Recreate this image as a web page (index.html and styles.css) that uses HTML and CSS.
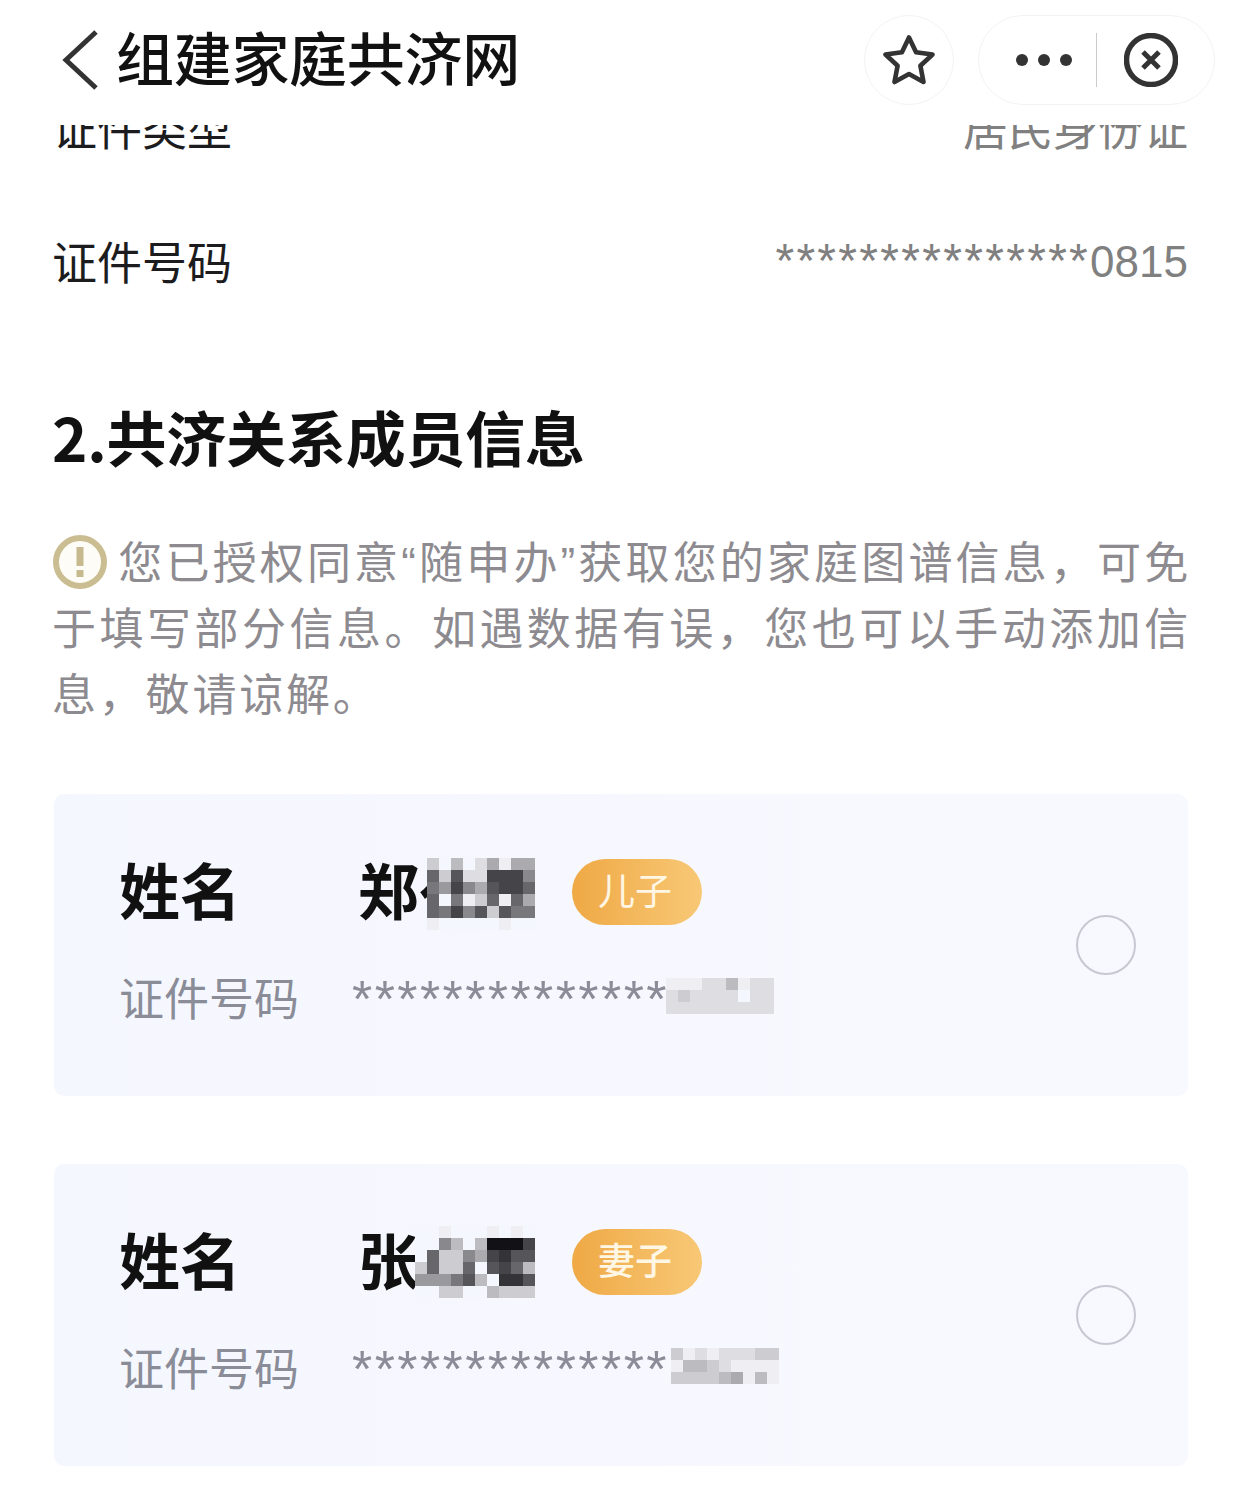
FILE: index.html
```html
<!DOCTYPE html>
<html lang="zh-CN">
<head>
  <meta charset="UTF-8" />
  <meta name="viewport" content="width=device-width, initial-scale=1.0"/>
  <title>组建家庭共济网</title>
  <link rel="stylesheet" href="styles.css">
</head>
<body>
  <header class="nav">
    <svg class="back-icon" width="36" height="60" viewBox="0 0 36 60">
      <path d="M34 2 L4 30 L34 58" fill="none" stroke="#333" stroke-width="5"/>
    </svg>
    <h1 class="nav-title">组建家庭共济网</h1>
    <div class="fav-btn">
      <svg width="52" height="50" viewBox="0 0 52 50">
        <polygon points="26,2.5 33.05,17.3 49.5,19.5 37.4,30.7 40.5,47 26,39 11.5,47 14.6,30.7 2.5,19.5 18.95,17.3" fill="none" stroke="#333" stroke-width="4.6" stroke-linejoin="round"/>
      </svg>
    </div>
    <div class="capsule">
      <div class="dots"><span></span><span></span><span></span></div>
      <div class="capsule-line"></div>
      <svg width="54" height="54" viewBox="0 0 54 54">
        <circle cx="27" cy="27" r="24.5" fill="none" stroke="#333" stroke-width="5.5"/>
        <path d="M19 19 L35 35 M35 19 L19 35" fill="none" stroke="#333" stroke-width="5"/>
      </svg>
    </div>
  </header>

  <main class="content">
    <div class="info-row first">
      <span class="info-label">证件类型</span>
      <span class="info-value cjk">居民身份证</span>
    </div>
    <div class="info-row">
      <span class="info-label">证件号码</span>
      <span class="info-value"><span class="stars">***************</span>0815</span>
    </div>

    <h2 class="section-title">2.共济关系成员信息</h2>

    <p class="notice">
      <svg class="notice-icon" width="54" height="54" viewBox="0 0 54 54">
        <circle cx="27" cy="27" r="24" fill="#fdfcf6" stroke="#cbbd92" stroke-width="6"/>
        <rect x="23.5" y="12" width="7" height="19" fill="#c6b98f"/>
        <rect x="23.5" y="35" width="7" height="7" fill="#c6b98f"/>
      </svg>您已授权同意“随申办”获取您的家庭图谱信息，可免于填写部分信息。如遇数据有误，您也可以手动添加信息，敬请谅解。
    </p>

    <section class="member-card">
      <div class="member-info">
        <div class="member-line">
          <span class="member-label strong">姓名</span>
          <span class="member-name">郑亻<span class="mosaic over low" data-rows="cfbfdaeaa,6c5dd4448,7948a5446,6f7ec6e6a,67485c577,efffffeff"></span></span>
          <span class="badge">儿子</span>
        </div>
        <div class="member-line id-line">
          <span class="member-label">证件号码</span>
          <span class="stars card-stars">**************</span>
          <span class="mosaic tail-a" data-rows="eeeddbedd,dcddddfdd,ddddddddd"></span>
        </div>
      </div>
      <span class="radio"></span>
    </section>

    <section class="member-card">
      <div class="member-info">
        <div class="member-line">
          <span class="member-label strong">姓名</span>
          <span class="member-name">张<span class="mosaic over" data-rows="ffefffefef,ff8bfb1114,f6cc8a4355,c6cc6f546b,99975bf335,ffccffbccc"></span></span>
          <span class="badge strong">妻子</span>
        </div>
        <div class="member-line id-line">
          <span class="member-label">证件号码</span>
          <span class="stars card-stars">**************</span>
          <span class="mosaic tail-b" data-rows="cededddcc,ebbcdeeee,ccccbaebe"></span>
        </div>
      </div>
      <span class="radio"></span>
    </section>
  </main>

  <script src="mosaic.js"></script>
</body>
</html>
```

FILE: styles.css
```css
:root {
  --text: #1c1c1e;
  --muted: #808080;
  --note: #8d8b90;
  --label: #8a8c98;
}

* {
  box-sizing: border-box;
}

html,
body {
  margin: 0;
  padding: 0;
}

body {
  width: 1242px;
  height: 1512px;
  overflow: hidden;
  background: #fff;
  color: var(--text);
  font-family: "Noto Sans CJK SC", "Liberation Sans", sans-serif;
  display: flex;
  flex-direction: column;
}

/* top bar */
.nav {
  height: 125px;
  flex: none;
  display: flex;
  align-items: flex-start;
  padding: 15px 27px 0 62px;
  background: #fff;
}

.back-icon {
  margin-top: 15px;
  flex: none;
}

.nav-title {
  margin: 0 0 0 18px;
  font-size: 58px;
  line-height: 82px;
  font-weight: 500;
  letter-spacing: -0.3px;
  color: #111;
  flex: 1;
}

.fav-btn {
  width: 90px;
  height: 90px;
  border: 1px solid #f3f3f3;
  border-radius: 50%;
  display: flex;
  align-items: center;
  justify-content: center;
  margin-right: 24px;
}

.capsule {
  width: 237px;
  height: 90px;
  border: 1px solid #f3f3f3;
  border-radius: 45px;
  display: flex;
  align-items: center;
  padding-left: 37px;
}

.dots {
  display: flex;
  gap: 10px;
  width: 80px;
}

.dots span {
  width: 12px;
  height: 12px;
  border-radius: 50%;
  background: #333;
}

.capsule-line {
  width: 1px;
  height: 54px;
  background: #ccc;
  margin-right: 27px;
}

/* page body */
.content {
  flex: 1;
  overflow: hidden;
  padding: 0 54px;
}

.info-row {
  height: 134px;
  display: flex;
  align-items: center;
  justify-content: space-between;
  font-size: 44px;
}

.info-row.first {
  margin-top: -64px;
}

.info-label {
  font-size: 45px;
  margin-left: -2px;
  padding-bottom: 4px;
}

.info-value {
  color: var(--muted);
  font-family: "Liberation Sans", "Noto Sans CJK SC", sans-serif;
}

.info-value.cjk {
  font-size: 45px;
  padding-bottom: 4px;
}

.stars {
  font-size: 48px;
  line-height: 1;
  letter-spacing: 2.3px;
}

.section-title {
  margin: 65px 0 0 -2px;
  font-size: 60px;
  line-height: 84px;
  font-weight: 700;
  letter-spacing: -0.2px;
  color: #111;
}

.notice {
  margin: 53px -3px 0 -2px;
  font-family: "Liberation Sans", "Noto Sans CJK SC", sans-serif;
  font-size: 44px;
  line-height: 66px;
  letter-spacing: 2.8px;
  color: var(--note);
  text-align: justify;
}

.notice-icon {
  vertical-align: -10px;
  margin-right: 11px;
  margin-left: 1px;
}

/* member cards */
.member-card {
  height: 302px;
  margin-top: 68px;
  padding: 0 52px 0 65px;
  background: linear-gradient(90deg, #f5f7fe, #f8f9ff);
  border-radius: 10px;
  display: flex;
  align-items: center;
  justify-content: space-between;
}

.notice + .member-card {
  margin-top: 65px;
}

.member-info {
  margin-bottom: 2px;
}

.member-line {
  display: flex;
  align-items: center;
  height: 66px;
}

.id-line {
  margin-top: 38px;
}

.member-label {
  width: 233px;
  font-size: 45px;
  color: var(--label);
  flex: none;
}

.member-label.strong {
  width: 239px;
  font-size: 61px;
  line-height: 78px;
  height: 84px;
  font-weight: 700;
  color: #111;
}

.member-name {
  position: relative;
  width: 177px;
  height: 84px;
  font-size: 61px;
  line-height: 78px;
  font-weight: 700;
  color: #111;
  white-space: nowrap;
}

.badge {
  width: 130px;
  height: 66px;
  margin-left: 37px;
  padding-right: 4px;
  border-radius: 33px;
  background: linear-gradient(90deg, #efa945, #f8c876);
  color: #fff6e4;
  font-size: 37px;
  line-height: 61px;
  text-align: center;
}

.badge.strong {
  font-weight: 500;
}

.card-stars {
  font-family: "Liberation Sans", sans-serif;
  font-size: 52px;
  letter-spacing: 2.4px;
  padding-top: 6px;
  color: var(--label);
  line-height: 66px;
}

.mosaic {
  display: inline-grid;
  grid-auto-rows: 12px;
  grid-auto-columns: 12px;
  flex: none;
}

.mosaic.over {
  position: absolute;
  right: 0;
  top: 6px;
}

.mosaic.over.low {
  top: 8px;
}

.mosaic.tail-a {
  margin: 0 0 0 -3px;
}

.mosaic.tail-b {
  margin: 0 0 0 2px;
}

.mosaic span {
  display: block;
  width: 12px;
  height: 12px;
}

.radio {
  width: 60px;
  height: 60px;
  border: 2px solid #c6c9d1;
  border-radius: 50%;
  flex: none;
}
```

FILE: mosaic.js
```js
// build the pixelated name / id blocks from the grey levels in data-rows
document.querySelectorAll(".mosaic").forEach(function (box) {
  const rows = box.dataset.rows.split(",");
  rows.forEach(function (row, y) {
    row.split("").forEach(function (ch, x) {
      const level = parseInt(ch, 16);
      const cell = document.createElement("span");
      cell.style.gridRow = y + 1;
      cell.style.gridColumn = x + 1;
      const v = level * 17;
      cell.style.background = level === 15 ? "#f5f7fe" : "rgb(" + v + "," + v + "," + Math.min(v + 5, 255) + ")";
      box.appendChild(cell);
    });
  });
});
```
